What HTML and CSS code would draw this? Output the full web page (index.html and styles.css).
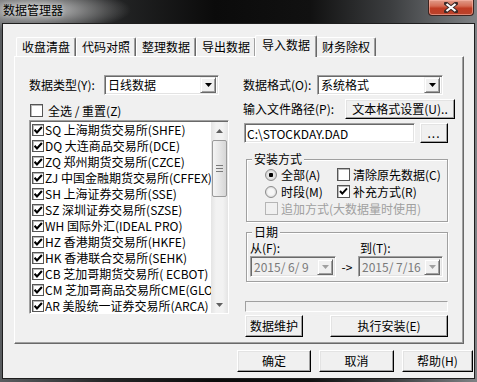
FILE: index.html
```html
<!DOCTYPE html>
<html>
<head>
    <meta charset="utf-8">
    <title>数据管理器</title>
    <link rel="stylesheet" href="styles.css">
</head>
<body>
    <div class="window">
        <div class="titlebar">
            <span class="title">数据管理器</span>
            <div class="close_btn">
                <svg width="14" height="11" viewBox="0 0 14 11"><path d="M2 1.5 L12 9.5 M12 1.5 L2 9.5" stroke="#3b2a28" stroke-width="4" stroke-linecap="square"/><path d="M2.5 2 L11.5 9 M11.5 2 L2.5 9" stroke="#fff" stroke-width="2.2"/></svg>
            </div>
        </div>
        <div class="client">
            <div class="tabs">
                <div class="tab">收盘清盘</div>
                <div class="tab">代码对照</div>
                <div class="tab">整理数据</div>
                <div class="tab">导出数据</div>
                <div class="tab active">导入数据</div>
                <div class="tab">财务除权</div>
            </div>
            <div class="panel">
                <div class="col_left">
                    <div class="field">
                        <span class="field_label w75">数据类型(Y):</span>
                        <div class="combo w115">
                            <span class="combo_text">日线数据</span>
                            <span class="drop"><svg width="7" height="4" viewBox="0 0 7 4"><path d="M0 0 H7 L3.5 4 Z" fill="#000"/></svg></span>
                        </div>
                    </div>
                    <div class="check_row">
                        <span class="box"></span>
                        <span>全选 / 重置(Z)</span>
                    </div>
                    <div class="listbox">
                        <div class="list_items">
                            <div class="item"><span class="box small checked"></span>SQ 上海期货交易所(SHFE)</div>
                            <div class="item"><span class="box small checked"></span>DQ 大连商品交易所(DCE)</div>
                            <div class="item"><span class="box small checked"></span>ZQ 郑州期货交易所(CZCE)</div>
                            <div class="item"><span class="box small checked"></span>ZJ 中国金融期货交易所(CFFEX)</div>
                            <div class="item"><span class="box small checked"></span>SH 上海证券交易所(SSE)</div>
                            <div class="item"><span class="box small checked"></span>SZ 深圳证券交易所(SZSE)</div>
                            <div class="item"><span class="box small checked"></span>WH 国际外汇(IDEAL PRO)</div>
                            <div class="item"><span class="box small checked"></span>HZ 香港期货交易所(HKFE)</div>
                            <div class="item"><span class="box small checked"></span>HK 香港联合交易所(SEHK)</div>
                            <div class="item"><span class="box small checked"></span>CB 芝加哥期货交易所( ECBOT)</div>
                            <div class="item"><span class="box small checked"></span>CM 芝加哥商品交易所CME(GLOBEX)</div>
                            <div class="item"><span class="box small checked"></span>AR 美股统一证券交易所(ARCA)</div>
                        </div>
                        <div class="vscroll">
                            <div class="arrow"><svg width="7" height="4" viewBox="0 0 7 4"><path d="M0 4 H7 L3.5 0 Z" fill="#606060"/></svg></div>
                            <div class="thumb">
                                <span class="grip"></span>
                            </div>
                            <div class="track"></div>
                            <div class="arrow"><svg width="7" height="4" viewBox="0 0 7 4"><path d="M0 0 H7 L3.5 4 Z" fill="#606060"/></svg></div>
                        </div>
                    </div>
                </div>

                <div class="col_right">
                    <div class="field">
                        <span class="field_label w74">数据格式(O):</span>
                        <div class="combo w126">
                            <span class="combo_text">系统格式</span>
                            <span class="drop"><svg width="7" height="4" viewBox="0 0 7 4"><path d="M0 0 H7 L3.5 4 Z" fill="#000"/></svg></span>
                        </div>
                    </div>
                    <div class="field mt4">
                        <span class="field_label w102">输入文件路径(P):</span>
                        <button class="btn w110 h20" type="button">文本格式设置(U)..</button>
                    </div>
                    <div class="field mt4">
                        <div class="textbox">C:\STOCKDAY.DAD</div>
                        <button class="btn w28 h20 dots" type="button">...</button>
                    </div>

                    <fieldset class="group install">
                        <legend>安装方式</legend>
                        <div class="opt_grid">
                            <div class="opt"><span class="radio on"></span>全部(A)</div>
                            <div class="opt"><span class="box"></span>清除原先数据(C)</div>
                            <div class="opt"><span class="radio"></span>时段(M)</div>
                            <div class="opt"><span class="box checked"></span>补充方式(R)</div>
                            <div class="opt wide disabled"><span class="box"></span>追加方式(大数据量时使用)</div>
                        </div>
                    </fieldset>

                    <fieldset class="group dates">
                        <legend>日期</legend>
                        <div class="date_grid">
                            <span class="date_label">从(F):</span>
                            <span></span>
                            <span class="date_label to">到(T):</span>
                            <div class="combo disabled_combo">
                                <span class="combo_text">2015/ 6/ 9</span>
                                <span class="drop"><svg width="7" height="4" viewBox="0 0 7 4"><path d="M0 0 H7 L3.5 4 Z" fill="#a0a0a0"/></svg></span>
                            </div>
                            <span class="arrow_text">-&gt;</span>
                            <div class="combo disabled_combo">
                                <span class="combo_text">2015/ 7/16</span>
                                <span class="drop"><svg width="7" height="4" viewBox="0 0 7 4"><path d="M0 0 H7 L3.5 4 Z" fill="#a0a0a0"/></svg></span>
                            </div>
                        </div>
                    </fieldset>

                    <div class="progress"></div>
                    <div class="actions">
                        <button class="btn w58 h22" type="button">数据维护</button>
                        <button class="btn w118 h22" type="button">执行安装(E)</button>
                    </div>
                </div>
            </div>
            <div class="footer">
                <button class="btn w74 h22" type="button">确定</button>
                <button class="btn w75 h22" type="button">取消</button>
                <button class="btn w71 h22" type="button">帮助(H)</button>
            </div>
        </div>
    </div>
</body>
</html>
```

FILE: styles.css
```css
* {
    box-sizing: border-box;
}
body {
    margin: 0;
    background: #4a4d50;
    font-family: "Noto Sans CJK SC", sans-serif;
    font-size: 12px;
    color: #000;
}
.window {
    width: 477px;
    height: 382px;
    display: flex;
    flex-direction: column;
    padding: 0 2px 3px;
    background:
        radial-gradient(ellipse 95px 22px at 36px 10px, rgba(215, 215, 215, 0.95), rgba(170, 170, 170, 0.55) 55%, rgba(120, 120, 120, 0) 100%),
        linear-gradient(90deg, #5a5d60 0%, #262728 22%, #0b0b0b 45%, #111 65%, #3c3e40 82%, #7f8285 100%);
}
.titlebar {
    height: 23px;
    flex: none;
    display: flex;
    justify-content: space-between;
    align-items: flex-start;
    margin: 0 -2px;
}
.title {
    padding: 3px 0 0 3px;
    line-height: 14px;
    color: #000;
    text-shadow: 0 0 4px rgba(230, 230, 230, 0.9);
}
.close_btn {
    width: 46px;
    height: 16px;
    margin-right: 3px;
    display: flex;
    align-items: center;
    justify-content: center;
    border: 1px solid #3d2420;
    border-top: none;
    border-radius: 0 0 4px 4px;
    background: linear-gradient(#e19c8a 0%, #d56c55 40%, #c03c24 55%, #b8432c 100%);
    box-shadow: inset 0 0 0 1px rgba(255, 190, 175, 0.55);
}
.client {
    flex: 1;
    border: 1px solid #1e1e1e;
    background: #f0f0f0;
    padding: 11px 0 0 11px;
}
.tabs {
    display: flex;
    align-items: flex-end;
    height: 21px;
    padding-left: 2px;
}
.tab {
    width: 60px;
    height: 19px;
    line-height: 18px;
    text-align: center;
    background: #f0f0f0;
    border-top: 1px solid #fff;
    border-left: 1px solid #fff;
    border-right: 1px solid #696969;
    box-shadow: inset -1px 0 #a0a0a0;
    border-radius: 2px 2px 0 0;
}
.tab.active {
    position: relative;
    z-index: 1;
    width: 62px;
    height: 22px;
    margin: 0 -1px -1px;
    line-height: 18px;
    padding-bottom: 3px;
}
.panel {
    width: 450px;
    height: 288px;
    display: flex;
    gap: 14px;
    padding: 18px 7px 0 14px;
    border: 1px solid;
    border-color: #fff #696969 #696969 #fff;
    box-shadow: inset -1px -1px #a0a0a0;
}
.col_left {
    width: 200px;
}
.col_right {
    width: 212px;
}
.field {
    display: flex;
    align-items: center;
    height: 20px;
}
.mt4 {
    margin-top: 4px;
}
.field_label {
    flex: none;
    line-height: 14px;
}
.w74 { width: 74px; }
.w75 { width: 75px; }
.w102 { width: 102px; }
.w115 { width: 115px; }
.w126 { width: 126px; }

.combo {
    display: flex;
    align-items: center;
    height: 20px;
    background: #fff;
    border: 1px solid;
    border-color: #a0a0a0 #fff #fff #a0a0a0;
    box-shadow: inset 1px 1px #696969, inset -1px -1px #e3e3e3;
    padding: 2px 2px 2px 3px;
}
.combo_text {
    flex: 1;
    line-height: 14px;
    white-space: pre;
}
.drop {
    width: 16px;
    height: 16px;
    display: flex;
    align-items: center;
    justify-content: center;
    background: #f0f0f0;
    border: 1px solid;
    border-color: #f0f0f0 #696969 #696969 #f0f0f0;
    box-shadow: inset 1px 1px #fff, inset -1px -1px #a0a0a0;
}
.box {
    flex: none;
    width: 13px;
    height: 13px;
    background: #fff;
    border: 1px solid #555;
    box-shadow: inset 1px 1px #b8b8b8;
    margin-right: 5px;
}
.box.small {
    width: 12px;
    height: 12px;
    margin-right: 1px;
}
.box.checked {
    background: #fff url("data:image/svg+xml,%3Csvg xmlns='http://www.w3.org/2000/svg' width='11' height='11' viewBox='0 0 11 11'%3E%3Cpath d='M2 5 L4.3 7.6 L9 2.4' fill='none' stroke='%23000' stroke-width='2'/%3E%3C/svg%3E") center / 11px 11px no-repeat;
}
.check_row {
    display: flex;
    align-items: center;
    height: 13px;
    margin-top: 9px;
    padding-left: 1px;
    line-height: 13px;
}
.listbox {
    margin-top: 3px;
    width: 200px;
    height: 194px;
    display: flex;
    background: #fff;
    border: 1px solid;
    border-color: #a0a0a0 #fff #fff #a0a0a0;
    box-shadow: inset 1px 1px #696969;
    padding: 1px 0 0 1px;
    overflow: hidden;
}
.list_items {
    flex: 1;
    min-width: 0;
    overflow: hidden;
    padding-left: 1px;
}
.item {
    display: flex;
    align-items: center;
    height: 16px;
    line-height: 16px;
    white-space: pre;
}
.vscroll {
    width: 17px;
    flex: none;
    display: flex;
    flex-direction: column;
    background: linear-gradient(90deg, #e4e4e4, #f2f2f2 30%, #f2f2f2 70%, #e4e4e4);
}
.arrow {
    height: 17px;
    display: flex;
    align-items: center;
    justify-content: center;
}
.thumb {
    height: 57px;
    margin: 1px 1px 0;
    border: 1px solid #9a9a9a;
    border-radius: 2px;
    background: linear-gradient(90deg, #f4f4f4, #e6e6e6 50%, #d6d6d6);
    display: flex;
    align-items: center;
    justify-content: center;
}
.grip {
    width: 7px;
    height: 7px;
    background: repeating-linear-gradient(#7a7a7a 0 1px, transparent 1px 3px);
}
.track {
    flex: 1;
}

.btn {
    font: inherit;
    color: #000;
    padding: 0;
    background: #f0f0f0;
    border: 1px solid;
    border-color: #fff #000 #000 #fff;
    box-shadow: inset -1px -1px #a0a0a0, inset 1px 1px #e3e3e3;
    line-height: 14px;
    white-space: nowrap;
}
.h20 { height: 20px; }
.h22 { height: 22px; }
.w28 { width: 28px; }
.w58 { width: 58px; }
.w71 { width: 71px; }
.w110 { width: 110px; }
.w118 { width: 118px; }
.dots {
    margin-left: 5px;
    letter-spacing: 1px;
}
.textbox {
    width: 171px;
    height: 20px;
    margin-left: 1px;
    padding: 2px 2px 0;
    line-height: 15px;
    background: #fff;
    border: 1px solid;
    border-color: #a0a0a0 #fff #fff #a0a0a0;
    box-shadow: inset 1px 1px #696969, inset -1px -1px #e3e3e3;
}

.group {
    width: 202px;
    margin: 9px 0 0 3px;
    padding: 0 0 4px;
    border: 1px solid #a0a0a0;
    box-shadow: 1px 1px #fff, inset 1px 1px #fff;
}
.group legend {
    margin-left: 5px;
    padding: 0 2px;
    line-height: 14px;
    background: #f0f0f0;
}
.group.dates {
    margin-top: 3px;
}
.opt_grid {
    display: grid;
    grid-template-columns: 72px auto;
    grid-auto-rows: 17px;
    padding-left: 18px;
}
.opt {
    display: flex;
    align-items: center;
    white-space: nowrap;
}
.opt .box {
    margin-right: 3px;
}
.opt.wide {
    grid-column: 1 / 3;
}
.disabled {
    color: #a0a0a0;
}
.disabled .box {
    background: #f0f0f0;
    border-color: #b5b5b5;
    box-shadow: none;
}
.radio {
    flex: none;
    width: 12px;
    height: 12px;
    margin-right: 4px;
    border: 1px solid #8c8c8c;
    border-radius: 50%;
    background: radial-gradient(circle at 50% 50%, #f6f6f6 0 3px, #dcdcdc 5px);
}
.radio.on {
    background: radial-gradient(circle at 50% 50%, #000 0 2px, #e6e6e6 2.5px 3px, #d4d4d4 5px);
}
.date_grid {
    display: grid;
    grid-template-columns: 86px 22px 85px;
    grid-template-rows: 12px 21px;
    row-gap: 2px;
    margin-top: 3px;
    padding-left: 3px;
}
.date_label {
    line-height: 12px;
}
.date_label.to {
    padding-left: 2px;
}
.disabled_combo {
    height: 21px;
    background: #f0f0f0;
    color: #7a7a7a;
}
.disabled_combo .combo_text {
    padding-left: 0;
}
.arrow_text {
    line-height: 21px;
    text-align: center;
}
.progress {
    width: 203px;
    height: 11px;
    margin: 19px 0 0 2px;
    border: 1px solid;
    border-color: #a0a0a0 #fff #fff #a0a0a0;
    background: #f0f0f0;
}
.actions {
    display: flex;
    justify-content: space-between;
    width: 203px;
    margin: 3px 0 0 2px;
}
.footer {
    display: flex;
    gap: 8px;
    margin: 6px 0 0 223px;
}
```
